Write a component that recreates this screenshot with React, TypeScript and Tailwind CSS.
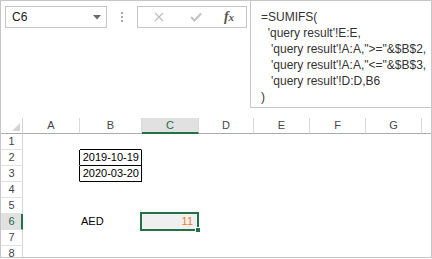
import React from 'react';

const COLS = [
  { id: 'A', w: 'w-[57px]' },
  { id: 'B', w: 'w-[62px]' },
  { id: 'C', w: 'w-[57px]' },
  { id: 'D', w: 'w-[55px]' },
  { id: 'E', w: 'w-[56px]' },
  { id: 'F', w: 'w-[56px]' },
  { id: 'G', w: 'w-[56px]' },
];

const ROWS = [1, 2, 3, 4, 5, 6, 7, 8];

// cell values, keyed "B2"
const VALUES: Record<string, string> = {
  B2: '2019-10-19',
  B3: '2020-03-20',
  B6: 'AED',
  C6: '11',
};

function cellBorder(key: string) {
  const right = ['A2', 'A3', 'B2', 'B3'].includes(key) ? 'border-r-black' : 'border-r-transparent';
  const bottom = ['B1', 'B2', 'B3'].includes(key) ? 'border-b-black' : 'border-b-transparent';
  return `${right} ${bottom}`;
}

function NameBox() {
  return (
    <div className="flex h-[22px] w-[102px] items-center justify-between border border-[#c6c6c6] pl-[6px] pr-[5px] text-[12px] text-[#222]">
      <span>C6</span>
      <svg width="8" height="5" viewBox="0 0 8 5">
        <polygon points="0,0 8,0 4,4.5" fill="#6b6b6b" />
      </svg>
    </div>
  );
}

function FormulaButtons() {
  return (
    <div className="flex h-[22px] w-[110px] items-center border border-[#c6c6c6]">
      <div className="flex w-[42px] justify-center">
        <svg width="10" height="10" viewBox="0 0 10 10">
          <path d="M1 1 L9 9 M9 1 L1 9" stroke="#bdbdbd" strokeWidth="1.2" />
        </svg>
      </div>
      <div className="flex w-[32px] justify-center">
        <svg width="12" height="10" viewBox="0 0 12 10">
          <path d="M1 5 L4.5 8.5 L11 1.5" stroke="#c4c4c4" strokeWidth="2.2" fill="none" />
        </svg>
      </div>
      <div className="flex w-[34px] justify-center">
        <span className="font-['Liberation_Serif',serif] text-[14px] font-semibold italic leading-none text-[#555]">
          f<span className="text-[11px]">x</span>
        </span>
      </div>
    </div>
  );
}

export default function App() {
  return (
    <div className="h-[258px] w-[432px] overflow-hidden border border-[#c6c6c6] bg-white font-['Liberation_Sans',Arial,sans-serif]">
      {/* formula bar */}
      <div className="flex h-[107px]">
        <div className="flex flex-1 items-start pl-[4px] pt-[5px]">
          <NameBox />
          <div className="ml-[14px] mr-[14px] mt-[6px] flex flex-col gap-[2px]">
            <span className="h-[2px] w-[2px] bg-[#a8a8a8]" />
            <span className="h-[2px] w-[2px] bg-[#a8a8a8]" />
            <span className="h-[2px] w-[2px] bg-[#a8a8a8]" />
          </div>
          <FormulaButtons />
        </div>
        <div className="w-[181px] whitespace-pre border-b border-l border-[#c6c6c6] pl-[10px] pt-[8px] text-[12px] leading-[16px] text-[#333]">
          {'=SUMIFS(\n  \'query result\'!E:E,\n   \'query result\'!A:A,">="&$B$2,\n   \'query result\'!A:A,"<="&$B$3,\n   \'query result\'!D:D,B6\n)'}
        </div>
      </div>

      {/* sheet */}
      <div className="relative mt-[10px] text-[11px]">
        <div className="flex h-[16px]">
          <div className="flex w-[22px] items-end justify-end border-b border-r border-[#ababab] border-r-[#d6d6d6] pb-[2px] pr-[2px]">
            <svg width="8" height="8" viewBox="0 0 8 8">
              <polygon points="8,0 8,8 0,8" fill="#d4d4d4" />
            </svg>
          </div>
          {COLS.map((c) => (
            <div
              key={c.id}
              className={`${c.w} flex items-center justify-center border-r border-r-[#dadada] ${
                c.id === 'C'
                  ? 'border-b-2 border-b-[#217346] bg-[#e1e1e1] text-[#1f6b3f]'
                  : 'border-b border-b-[#ababab] text-[#444]'
              }`}
            >
              {c.id}
            </div>
          ))}
          <div className="flex-1 border-b border-b-[#ababab]" />
        </div>

        {ROWS.map((r) => (
          <div key={r} className="flex h-[16px]">
            <div
              className={`flex w-[22px] items-center justify-center border-b border-b-[#e1e1e1] ${
                r === 6
                  ? 'border-r-2 border-r-[#217346] bg-[#e1e1e1] pl-[1px] text-[#1f6b3f]'
                  : 'border-r border-r-[#d6d6d6] text-[#444]'
              }`}
            >
              {r}
            </div>
            {COLS.map((c) => {
              const key = `${c.id}${r}`;
              const v = VALUES[key];
              const isText = key === 'B6';
              return (
                <div
                  key={key}
                  className={`${c.w} flex items-center border-b border-r ${cellBorder(key)} ${
                    isText ? 'justify-start pl-[1px]' : 'justify-end pr-[2px]'
                  } ${key === 'C6' ? 'bg-[#f0f0f0] pr-[5px] text-[#ed7d31]' : 'text-black'}`}
                >
                  {v}
                </div>
              );
            })}
            <div className="flex-1" />
          </div>
        ))}

        {/* active cell C6 */}
        <div className="absolute left-[139px] top-[94px] h-[19px] w-[59px] border-2 border-[#217346]" />
        <div className="absolute left-[194px] top-[109px] h-[6px] w-[6px] border border-white bg-[#217346]" />
      </div>
    </div>
  );
}
